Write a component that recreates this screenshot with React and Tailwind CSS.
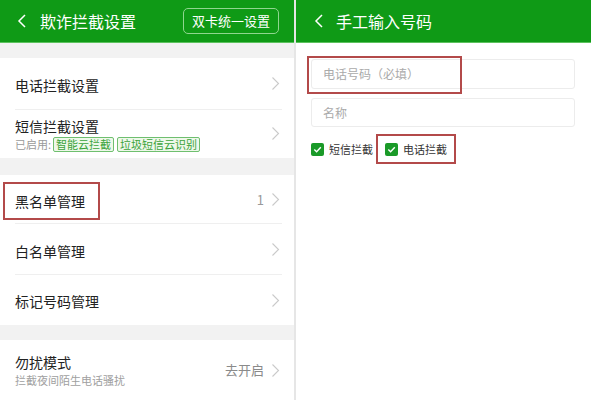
import React from "react";

const font = { fontFamily: '"Noto Sans CJK SC", "Noto Sans", sans-serif' };

function Chevron({ className = "" }) {
  return (
    <svg width="9" height="15" viewBox="0 0 9 15" className={className}>
      <path d="M1.5 1.5 L7.5 7.5 L1.5 13.5" fill="none" stroke="#cacaca" strokeWidth="1.1" />
    </svg>
  );
}

function Back() {
  return (
    <svg width="10" height="16" viewBox="0 0 10 16">
      <path d="M8 2 L2 8 L8 14" fill="none" stroke="#ffffff" strokeWidth="1.5" />
    </svg>
  );
}

function Row({ children, right, h = "h-[50px]", divider = true }) {
  return (
    <div className={`bg-white ${h} flex items-center pl-[15px] pr-[14px] relative`}>
      <div className="flex-1 min-w-0">{children}</div>
      <div className="flex items-center gap-[7px]">
        {right}
        <Chevron />
      </div>
      {divider && <div className="absolute left-[15px] right-[12px] bottom-0 h-px bg-[#efefef]" />}
    </div>
  );
}

function Check() {
  return (
    <span className="w-[13px] h-[13px] bg-[#1a9a28] rounded-[2px] flex items-center justify-center">
      <svg width="9" height="9" viewBox="0 0 9 9">
        <path d="M1.3 4.6 L3.6 6.8 L7.8 2.2" fill="none" stroke="#fff" strokeWidth="1.4" />
      </svg>
    </span>
  );
}

export default function App() {
  return (
    <div className="w-[591px] h-[400px] flex bg-white overflow-hidden" style={font}>
      {/* Left panel */}
      <div className="w-[294px] flex flex-col bg-[#f2f2f2]">
        <div className="h-[43px] bg-[#0f9a16] border-b border-[#5cc25e] flex items-center pl-[17px] pr-[15px]">
          <Back />
          <span className="ml-[13px] text-white text-[16px] leading-none flex-1">欺诈拦截设置</span>
          <span className="border border-[#8fd68f] rounded-[5px] h-[26px] w-[96px] justify-center flex items-center text-white text-[13px]">双卡统一设置</span>
        </div>
        <div className="h-[15px]" />
        <Row h="h-[52px]">
          <span className="text-[14px] text-[#222]">电话拦截设置</span>
        </Row>
        <Row h="h-[48px]" divider={false}>
          <div className="flex flex-col">
            <span className="text-[14px] text-[#222] leading-[18px] mt-[2px]">短信拦截设置</span>
            <div className="flex items-center mt-[2px] text-[11px] leading-none">
              <span className="text-[#9a9a9a]">已启用:</span>
              <span className="ml-[2px] border border-[#6fbf6f] bg-[#eef8ea] text-[#3aa33a] px-[2px] py-[1px] rounded-[2px]">智能云拦截</span>
              <span className="ml-[3px] border border-[#6fbf6f] bg-[#eef8ea] text-[#3aa33a] px-[2px] py-[1px] rounded-[2px]">垃圾短信云识别</span>
            </div>
          </div>
        </Row>
        <div className="h-[17px]" />
        <Row right={<span className="text-[13px] text-[#999]">1</span>}>
          <span className="relative text-[14px] text-[#222]">
            黑名单管理
            <span className="absolute -left-[12px] -right-[15px] -top-[9px] -bottom-[9px] border-2 border-[#b34a4a]" />
          </span>
        </Row>
        <Row h="h-[51px]">
          <span className="text-[14px] text-[#222]">白名单管理</span>
        </Row>
        <Row divider={false}>
          <span className="text-[14px] text-[#222]">标记号码管理</span>
        </Row>
        <div className="h-[15px]" />
        <Row h="h-[60px]" divider={false} right={<span className="text-[13px] text-[#8a8a8a]">去开启</span>}>
          <div className="flex flex-col">
            <span className="text-[14px] text-[#222] leading-[20px]">勿扰模式</span>
            <span className="text-[11px] text-[#a0a0a0] leading-[15px] mt-[1px]">拦截夜间陌生电话骚扰</span>
          </div>
        </Row>
      </div>
      <div className="w-[2px] bg-[#e6e6e6]" />
      {/* Right panel */}
      <div className="flex-1 flex flex-col bg-white">
        <div className="h-[43px] bg-[#0f9a16] border-b border-[#5cc25e] flex items-center pl-[18px]">
          <Back />
          <span className="ml-[12px] text-white text-[16px] leading-none">手工输入号码</span>
        </div>
        <div className="pl-[15px] pr-[16px] pt-[16px] flex flex-col">
          <div className="relative h-[30px] border border-[#ececec] rounded-[3px] flex items-center pl-[11px] text-[12px] text-[#aaa]">
            电话号码（必填）
            <span className="absolute -left-[5px] -top-[4px] w-[155px] h-[38px] border-2 border-[#b34a4a]" />
          </div>
          <div className="mt-[9px] h-[29px] border border-[#ececec] rounded-[3px] flex items-center pl-[11px] text-[12px] text-[#aaa]">
            名称
          </div>
          <div className="mt-[7px] flex items-center">
            <span className="flex items-center gap-[5px] text-[11px] text-[#333]">
              <Check />
              短信拦截
            </span>
            <span className="ml-[3px] h-[30px] w-[80px] border-2 border-[#b34a4a] flex items-center gap-[5px] pl-[7px] text-[11px] text-[#333]">
              <Check />
              电话拦截
            </span>
          </div>
        </div>
      </div>
    </div>
  );
}
